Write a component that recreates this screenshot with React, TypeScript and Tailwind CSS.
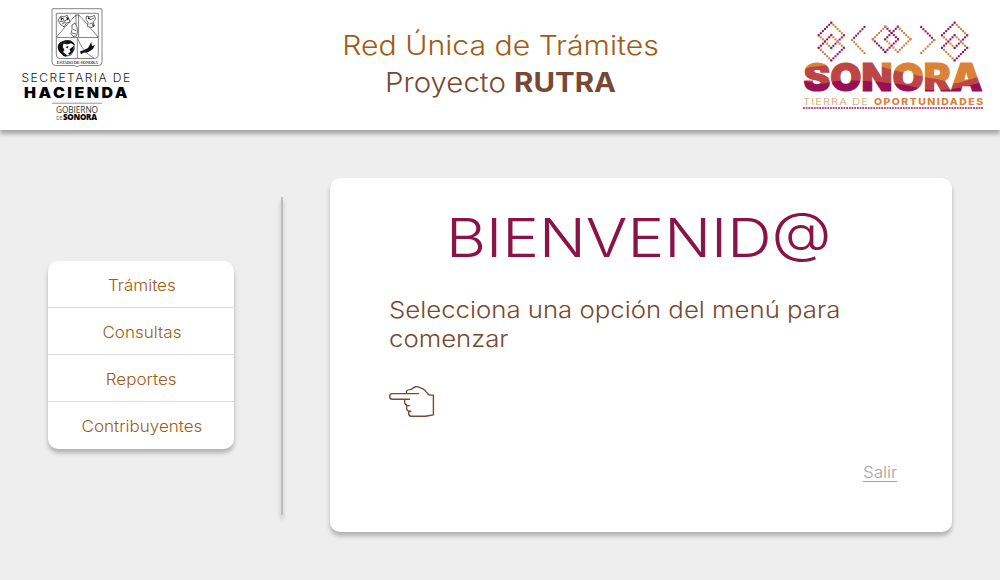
import React from "react";

const MAGENTA = "#9b0f55";
const ORANGE = "#cf8136";

type Pt = [number, number];

function Dots({ from, to, color }: { from: Pt; to: Pt; color: string }) {
  const n = 6;
  return (
    <g fill={color}>
      {Array.from({ length: n + 1 }, (_, i) => (
        <rect
          key={i}
          x={from[0] + ((to[0] - from[0]) * i) / n - 1}
          y={from[1] + ((to[1] - from[1]) * i) / n - 1}
          width={2}
          height={2}
        />
      ))}
    </g>
  );
}

function Diamond({ cx, cy, colors }: { cx: number; cy: number; colors: string[] }) {
  const r = 12.6;
  const t: Pt = [cx, cy - r];
  const ri: Pt = [cx + r, cy];
  const b: Pt = [cx, cy + r];
  const l: Pt = [cx - r, cy];
  return (
    <>
      <Dots from={t} to={ri} color={colors[1]} />
      <Dots from={b} to={l} color={colors[3]} />
      <Dots from={ri} to={b} color={colors[2]} />
      <Dots from={l} to={t} color={colors[0]} />
    </>
  );
}

function SonoraLogo() {
  const a = [MAGENTA, ORANGE, MAGENTA, ORANGE];
  return (
    <svg width="184" height="92" viewBox="800 20 184 92" role="img">
      <defs>
        <pattern id="bands" patternUnits="userSpaceOnUse" x="800" y="60" width="190" height="34">
          <rect width="190" height="34" fill="#dc8137" />
          <path d="M0 11L10 7L29 5L30 0H70L83 7C95 11 115 15 130 18C145 20 152 24 158 23L178 17L190 13V34H0Z" fill="#bc4645" />
          <path d="M0 20C15 23 22 25 30 22C45 20 60 20 88 23C105 24 118 28 130 30C150 31 165 27 190 20V34H0Z" fill="#970f54" />
        </pattern>
      </defs>
      <Diamond cx={831.3} cy={35.3} colors={a} />
      <Diamond cx={831.3} cy={47.8} colors={a} />
      <Diamond cx={954.6} cy={35.3} colors={a} />
      <Diamond cx={954.6} cy={47.8} colors={a} />
      <Diamond cx={897.8} cy={39.3} colors={[MAGENTA, ORANGE, ORANGE, "#c98a6a"]} />
      <Diamond cx={885.4} cy={39.3} colors={[ORANGE, MAGENTA, MAGENTA, MAGENTA]} />
      <Dots from={[864.5, 27]} to={[852, 40]} color={MAGENTA} />
      <Dots from={[852, 40]} to={[864.5, 53]} color={ORANGE} />
      <Dots from={[921.2, 27]} to={[934.2, 40]} color={MAGENTA} />
      <Dots from={[934.2, 40]} to={[921.2, 53]} color={ORANGE} />
      <text
        x="803.5"
        y="91"
        textLength="179"
        lengthAdjust="spacingAndGlyphs"
        fill="url(#bands)"
        stroke="url(#bands)"
        strokeWidth="1.2"
        className="font-['Inter',sans-serif] text-[38px] font-black"
      >
        SONORA
      </text>
      <text
        x="803"
        y="105"
        textLength="66"
        lengthAdjust="spacingAndGlyphs"
        fill="#dd9a60"
        className="font-['Inter',sans-serif] text-[9.6px] font-light tracking-[0.9px]"
      >
        TIERRA DE
      </text>
      <text
        x="874"
        y="105"
        textLength="110.5"
        lengthAdjust="spacingAndGlyphs"
        fill="#dc8137"
        className="font-['Inter',sans-serif] text-[9.4px] font-extrabold tracking-[1.3px]"
      >
        OPORTUNIDADES
      </text>
      <path d="M803 108H983.5" stroke={MAGENTA} strokeWidth="1.6" strokeDasharray="1.8 0.9" />
    </svg>
  );
}

function HaciendaLogo() {
  return (
    <svg width="112" height="116" viewBox="20 7 112 116" role="img">
      <g fill="none" stroke="#777" strokeWidth="0.9">
        <path d="M53 8.7H101Q102 8.7 102 9.7V62Q102 65.5 98.5 65.5H79.5L77 66.8L74.5 65.5H55.5Q52 65.5 52 62V9.7Q52 8.7 53 8.7Z" />
        <path d="M56.3 13.3H98.3V54Q98.3 58.5 94 58.5H60.5Q56.3 58.5 56.3 54Z" />
        <path d="M56.3 37.5H98.3M77.3 37.5V58.5M75.6 15L56.5 37M79 15L98.1 37M76 14V26M78.6 14V37" />
        <path d="M77.5 38C81 47 86 54 94 58" />
      </g>
      <g fill="#fff" stroke="#444" strokeWidth="0.8">
        <path d="M58 20L61 16L64 17L67 15L68.5 18L70 22L66.5 23L64 27L60 24Z" />
        <path d="M59.5 21l4 1 4-3M62 24l4-2M63 18l1 3" />
        <path d="M86.5 16l3.5 1 4.5-1.5 1 3.5-2.5 3 1.5 4-3 1.5-4-1 .5-4-2-3Z" />
        <path d="M88 18.5l3 1 3-1.5M89.5 24l3.5-1" />
        <path d="M72 25l3-2 2 4 .5 5-1 4-3.5 .5-2-3 1-4Z" />
        <path d="M73 29l3 2M72 33l4 1" />
        <path d="M75.6 17q1.7-4 3.4 0" />
        <path d="M60 43Q65 39 71 41Q75 44 74.5 49L71 55L65 56.5L60 52Z" />
      </g>
      <g fill="#111">
        <path d="M58.5 44Q63 40 68.5 40.3Q73.5 40.5 75 45.5L71 43.2L67 44.5L63.5 43.5L62.8 47L64.5 50L63 52L68 56L63.5 56L59.5 52Q56.5 48 58.5 44Z" />
        <path d="M69.5 49l4.5-3-.5 5-3.5 4-2-1 2.5-2.5ZM65.5 47l3-1-1 2.5Z" />
        <path d="M80 51.5L84 50L88 48L91.3 42L92 46L95 45L93 49L88 52.3L83.5 52.8L81 54.3Z" />
        <path d="M60.5 17l2.5 1.5-2 2.5ZM66 16.5l3 2-1.5 2ZM88.5 16.5l1.5 2.5-2 0ZM92 24l2 1-1 2Z" />
      </g>
      <text x="56.8" y="64.2" textLength="41" lengthAdjust="spacingAndGlyphs" fill="#333" className="font-['Liberation_Serif',serif] text-[5px] font-bold">
        ESTADO DE SONORA
      </text>
      <text x="21.5" y="82" textLength="110" lengthAdjust="spacingAndGlyphs" fill="#222" className="font-['Inter',sans-serif] text-[11px] font-light tracking-[1.3px]">
        SECRETARIA DE
      </text>
      <text x="24" y="98" textLength="106" lengthAdjust="spacingAndGlyphs" fill="#000" className="font-['Inter',sans-serif] text-[14.5px] font-black tracking-[2.3px]">
        HACIENDA
      </text>
      <path d="M52 103.2H102" stroke="#888" strokeWidth="0.9" />
      <text x="56" y="113" textLength="42" fill="#333" className="font-['Open_Sans',sans-serif] text-[8.3px]">
        GOBIERNO
      </text>
      <text x="56.3" y="119.6" textLength="6" fill="#444" className="font-['Open_Sans',sans-serif] text-[4.5px]">
        DE
      </text>
      <text x="63" y="119.6" textLength="34" fill="#000" className="font-['Open_Sans',sans-serif] text-[8px] font-extrabold">
        SONORA
      </text>
    </svg>
  );
}

function PointingHand() {
  return (
    <svg
      width="46"
      height="32"
      viewBox="389 386 46 32"
      fill="none"
      stroke="#784931"
      strokeWidth="1.4"
      strokeLinecap="round"
      strokeLinejoin="round"
    >
      <path d="M418.5 393.6H392.5C388.8 393.6 388.8 399.3 392.5 399.3H409.5" />
      <path d="M406.5 393V391.2Q407 389.8 410 389.6L411.5 389.2Q415.5 385.7 417.5 386.7L422.5 388.6Q426 390.5 427.5 393.5Q428.5 395 430 395.1H433.4V414.9L425.5 416.3H411Q408.2 415.8 408.8 412.2Q409.2 411.2 410.8 411.2" />
      <path d="M404.7 399.7Q403.9 405 407.5 405.6H409.5M406.8 405.9Q405.6 411.2 409.8 411.3" />
    </svg>
  );
}

const items = ["Trámites", "Consultas", "Reportes", "Contribuyentes"];

export default function App() {
  return (
    <div className="flex h-[580px] w-[1000px] flex-col overflow-hidden bg-[#eeeeee] font-['Inter',sans-serif]">
      <header className="z-10 flex h-[130px] shrink-0 items-start justify-between bg-white pl-5 pr-4 shadow-[0_4px_4px_rgba(0,0,0,0.3)]">
        <div className="w-[182px] pt-[7px]">
          <HaciendaLogo />
        </div>
        <h1 className="pt-[27px] text-center text-[27px] font-light leading-[37px] whitespace-nowrap">
          <span className="block scale-x-[1.118] text-[#a05c14]">Red Única de Trámites</span>
          <span className="block scale-x-[1.09] text-[#784931]">
            Proyecto <b className="font-bold">RUTRA</b>
          </span>
        </h1>
        <div className="pt-5">
          <SonoraLogo />
        </div>
      </header>

      <main className="flex flex-1 items-start pl-12">
        <nav className="mt-[131px] w-[186px] rounded-[10px] bg-white shadow-[0_4px_4px_rgba(0,0,0,0.25)]">
          {items.map((label) => (
            <a
              key={label}
              className="flex h-[47px] items-center justify-center border-b border-[#dcdcdc] pt-[3px] pl-px text-[15.5px] font-[360] text-[#a05c14] last:border-b-0"
            >
              <span className="scale-x-[1.1]">{label}</span>
            </a>
          ))}
        </nav>

        <div className="ml-[47px] mt-[67px] h-[318px] w-[2px] bg-[#bdbdbd] shadow-[0_4px_4px_rgba(0,0,0,0.25)]" />

        <section className="ml-[47px] mt-12 flex h-[354px] w-[622px] flex-col rounded-[10px] bg-white pl-[59px] pr-[54px] shadow-[0_4px_4px_rgba(0,0,0,0.25)]">
          <h2 className="mt-[25px] ml-[57px] origin-left scale-x-[1.143] text-[54px] font-[350] leading-[70px] text-[#8a1445] whitespace-nowrap">
            BIENVENID@
          </h2>
          <p className="mt-[23px] origin-left scale-x-[1.12] text-[23px] font-light leading-[29px] text-[#784931]">
            Selecciona una opción del menú para
            <br />
            comenzar
          </p>
          <div className="mt-[32px]">
            <PointingHand />
          </div>
          <a className="mt-[45px] mr-px origin-right scale-x-[1.1] self-end text-[15.5px] font-light leading-[20px] text-[#a3a3a3] underline decoration-1 underline-offset-[3px]">
            Salir
          </a>
        </section>
      </main>
    </div>
  );
}
